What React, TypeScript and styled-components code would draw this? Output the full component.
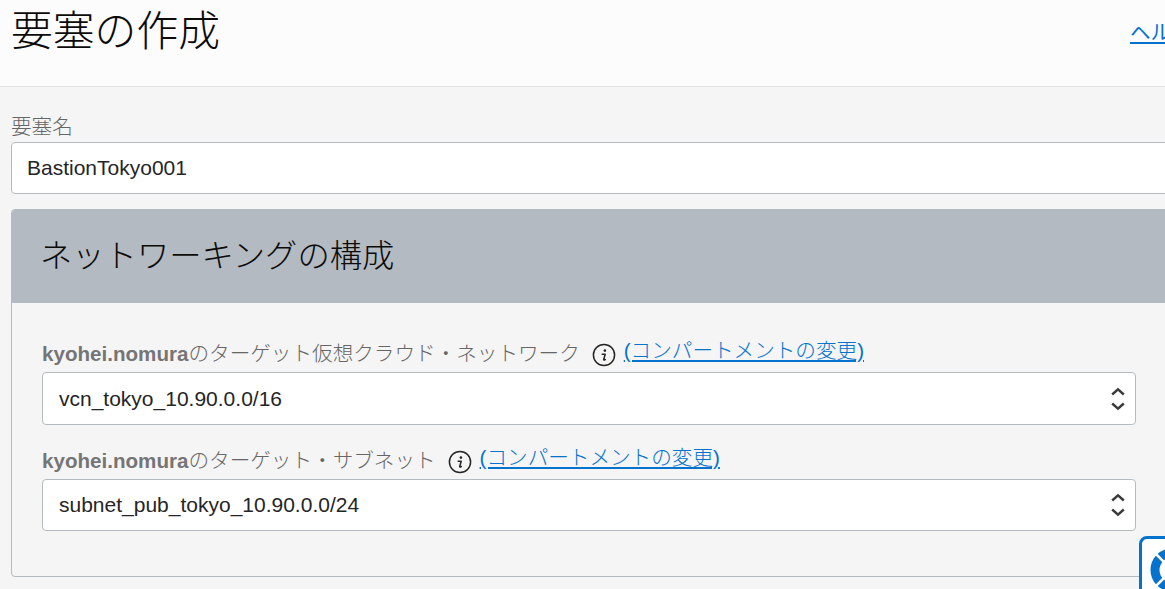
import React from "react";
import styled, { createGlobalStyle } from "styled-components";

const GlobalStyle = createGlobalStyle`
  html, body {
    margin: 0;
    padding: 0;
    height: 589px;
    overflow: hidden;
    background: #f5f5f5;
    font-family: "Liberation Sans", "Noto Sans CJK JP", sans-serif;
  }
`;

const Page = styled.div`
  position: relative;
  width: 1165px;
  height: 589px;
  overflow: hidden;
`;

const Header = styled.header`
  height: 86px;
  box-sizing: content-box;
  background: #fcfcfc;
  border-bottom: 1px solid #e4e4e4;
  display: flex;
  justify-content: space-between;
  padding-left: 11px;
`;

const Title = styled.h1`
  margin: 0;
  font-size: 41.8px;
  line-height: 64px;
  font-weight: 300;
  color: #0c0b0a;
`;

const HelpLink = styled.a`
  flex: none;
  width: 35px;
  margin-top: 19px;
  height: 27px;
  font-size: 20.6px;
  line-height: 27px;
  white-space: nowrap;
  overflow: hidden;
  color: #0572ce;
  text-decoration: underline;
`;

const Body = styled.main`
  width: 1300px;
  padding: 26px 0 0 11px;
`;

const TopLabel = styled.label`
  display: block;
  font-size: 20.6px;
  line-height: 28px;
  height: 29px;
  font-weight: 300;
  color: #666;
`;

const TextInput = styled.div`
  box-sizing: border-box;
  height: 52px;
  padding-left: 15px;
  background: #fff;
  border: 1px solid #b3bac2;
  border-radius: 4px;
  font-size: 21px;
  line-height: 50px;
  color: #252525;
`;

const Panel = styled.section`
  box-sizing: border-box;
  margin-top: 15px;
  height: 368px;
  border: 1px solid #b3bac2;
  border-radius: 4px;
  overflow: hidden;
  background: #f5f5f5;
`;

const PanelHeader = styled.h2`
  margin: 0;
  height: 93px;
  padding-left: 28px;
  background: #b3bac2;
  font-size: 32.3px;
  line-height: 92px;
  font-weight: 300;
  color: #0c0b0a;
`;

const PanelBody = styled.div`
  width: 1094px;
  padding: 37px 0 0 30px;
  display: flex;
  flex-direction: column;
  gap: 22px;
`;

const Field = styled.div`
  display: flex;
  flex-direction: column;
`;

const FieldLabel = styled.div`
  display: flex;
  align-items: flex-start;
  height: 32px;
  font-size: 20.6px;
  line-height: 28px;
  font-weight: 300;
  color: #666;
  white-space: nowrap;
`;

const Owner = styled.b`
  font-weight: 700;
  color: #757575;
`;

const InfoIcon = styled.svg`
  flex: none;
  width: 24px;
  height: 24px;
  margin: 3px 8px 0 12px;
`;

const ChangeLink = styled.a`
  margin-top: -3px;
  color: #0572ce;
  text-decoration: underline;
`;

const Select = styled.div<{ $short?: boolean }>`
  box-sizing: border-box;
  height: ${(p) => (p.$short ? 52 : 53)}px;
  padding: 0 10px 0 16px;
  display: flex;
  align-items: center;
  justify-content: space-between;
  background: #fff;
  border: 1px solid #b3bac2;
  border-radius: 4px;
  font-size: 21px;
  color: #252525;
`;

const Spinner = styled.svg`
  width: 14px;
  height: 24px;
`;

const HelpWidget = styled.div`
  position: absolute;
  left: 1139px;
  top: 536px;
  width: 60px;
  height: 70px;
  box-sizing: border-box;
  padding: 9px 0 0 8px;
  background: #fff;
  border: 3px solid #0572ce;
  border-radius: 8px;
`;

const Info = () => (
  <InfoIcon viewBox="0 0 24 24" aria-hidden="true">
    <circle cx="12" cy="12" r="10.6" fill="none" stroke="#252525" strokeWidth="1.5" />
    <circle cx="12.9" cy="7.6" r="1.3" fill="#252525" />
    <path d="M10.2 11.2h3l-1.5 5.3c-.1.5.3.7 1.6 0" fill="none" stroke="#252525" strokeWidth="1.5" strokeLinecap="round" strokeLinejoin="round" />
  </InfoIcon>
);

const Chevrons = () => (
  <Spinner viewBox="0 0 14 24" aria-hidden="true">
    <path d="M1.2 7.5l5.8-5.2 5.8 5.2M1.2 16.5l5.8 5.2 5.8-5.2" fill="none" stroke="#3a3a3a" strokeWidth="2.4" />
  </Spinner>
);

const fields = [
  { label: "のターゲット仮想クラウド・ネットワーク", value: "vcn_tokyo_10.90.0.0/16", short: false },
  { label: "のターゲット・サブネット", value: "subnet_pub_tokyo_10.90.0.0/24", short: true },
];

export default function App() {
  return (
    <Page>
      <GlobalStyle />
      <Header>
        <Title>要塞の作成</Title>
        <HelpLink>ヘルプ</HelpLink>
      </Header>
      <Body>
        <TopLabel>要塞名</TopLabel>
        <TextInput>BastionTokyo001</TextInput>
        <Panel>
          <PanelHeader>ネットワーキングの構成</PanelHeader>
          <PanelBody>
            {fields.map((f) => (
              <Field key={f.value}>
                <FieldLabel>
                  <Owner>kyohei.nomura</Owner>
                  {f.label}
                  <Info />
                  <ChangeLink>(コンパートメントの変更)</ChangeLink>
                </FieldLabel>
                <Select $short={f.short}>
                  {f.value}
                  <Chevrons />
                </Select>
              </Field>
            ))}
          </PanelBody>
        </Panel>
      </Body>
      <HelpWidget>
        <svg width="44" height="44" viewBox="0 0 44 44" aria-hidden="true">
          <circle cx="22" cy="22" r="17" fill="none" stroke="#0572ce" strokeWidth="9" />
          <path d="M6 6l9 9M38 6l-9 9M6 38l9-9M38 38l-9-9" stroke="#fff" strokeWidth="2.5" />
        </svg>
      </HelpWidget>
    </Page>
  );
}
